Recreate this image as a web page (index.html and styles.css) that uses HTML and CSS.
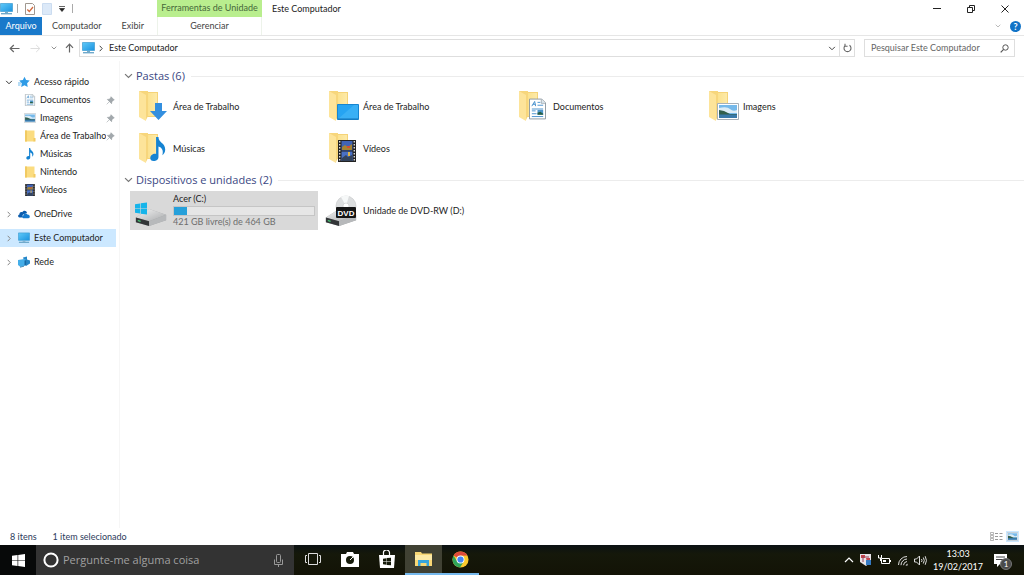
FILE: index.html
```html
<!DOCTYPE html>
<html lang="pt-BR">
<head>
<meta charset="utf-8">
<meta name="viewport" content="width=device-width, initial-scale=1">
<title>Este Computador</title>
<link rel="stylesheet" href="styles.css">
</head>
<body>
<svg class="defs" aria-hidden="true">
  <defs>
    <linearGradient id="screen" x1="0" y1="0" x2="1" y2="1"><stop offset="0" stop-color="#5fc9f8"/><stop offset="1" stop-color="#1b93e0"/></linearGradient>
    <linearGradient id="flap" x1="0" y1="0" x2="1" y2="0"><stop offset="0" stop-color="#fbe08a"/><stop offset="1" stop-color="#fdeaa8"/></linearGradient>
    <linearGradient id="metal" x1="0" y1="0" x2="1" y2="1"><stop offset="0" stop-color="#f4f4f4"/><stop offset="1" stop-color="#a9abad"/></linearGradient>
    <symbol id="pc" viewBox="0 0 13 12"><path d="M.5.5h12v8H.5z" fill="url(#screen)" stroke="#3d9bd0" stroke-width=".7"/><path d="M5 9h3v1H5z" fill="#7aa9c4"/><path d="M1 10h11v1.4H1z" fill="#6fa9cb"/></symbol>
    <symbol id="folder" viewBox="0 0 30 32"><path d="M9 2h11v25H8z" fill="#f5d378"/><path d="M9 3h10v23H8z" fill="url(#flap)"/><path d="M1 1h9v25l-2 4z" fill="#f7d67c"/><path d="M1 1l7 4v26l-7-4z" fill="#fde49a"/></symbol>
    <symbol id="smallfolder" viewBox="0 0 12 12"><path d="M1 .5h9.500v11H1z" fill="#fbdc80"/><path d="M1 .5h2v11H1zM9.500 8h2v3.500h-2z" fill="#f1ca62"/></symbol>
    <symbol id="down" viewBox="0 0 6 4"><path d="M.7.7L3 3 5.300.7" fill="none" stroke="currentColor" stroke-width=".8"/></symbol>
    <symbol id="right" viewBox="0 0 4 7"><path d="M.7.8l2.500 2.700L.7 6.200" fill="none" stroke="currentColor" stroke-width="1"/></symbol>
    <symbol id="note" viewBox="0 0 16 26"><path d="M6 0h2.500c0 6 7 6 7 13 0 3-1.500 5-3 6 1.500-5-.5-8-4-9v10.500c0 3-2.500 4.500-5 4.500S0 23.800 0 21.800C0 19 3 17 6 17.600z" fill="#1583d2"/></symbol>
    <symbol id="film" viewBox="0 0 18 22"><path d="M0 0h18v22H0z" fill="#222"/><path d="M3.500 1h11v9.500h-11z" fill="#3f63b5"/><path d="M3.500 11.500h11V21h-11z" fill="#4a70c4"/><path d="M4 7l3-2 3 2 4-3v6H4z" fill="#a58332"/><path d="M9 6h3v2H9z" fill="#d34d34"/><path d="M4 18l4-3 2 2 4-2v6H4z" fill="#34445c"/><path d="M10 12h2v4h-2z" fill="#dfb447"/><path d="M1.700 1v20M16.300 1v20" stroke="#ddd" stroke-width="1.400" stroke-dasharray="1.500 1.500"/></symbol>
    <symbol id="photo" viewBox="0 0 22 17"><path d="M.5.5h21v16H.5z" fill="#fff" stroke="#a7b0b8"/><path d="M2 2h18v13H2z" fill="#76b9ea"/><path d="M2 5q8-2 11 1t7 1v3H2z" fill="#dcecf6"/><path d="M2 7l5 1 6 3h7v1H2z" fill="#315f4c"/><path d="M2 11.500h18V15H2z" fill="#3979a9"/></symbol>
    <symbol id="doc" viewBox="0 0 18 22"><path d="M.5.5h13l4 4v17H.5z" fill="#fff" stroke="#8b979f"/><path d="M13 1v4h4" fill="#dce8f0" stroke="#8b979f" stroke-width=".7"/><path d="M3 8l3-5 1 5M4 6h3M9 4h3M9 7h6M3 11h12M3 13h4M3 16h5M3 19h12" fill="none" stroke="#3184c7" stroke-width=".9"/><path d="M9 12h6v5H9z" fill="#4c94c9"/><path d="M9 15l3-1 3 2v1H9z" fill="#275f45"/></symbol>
    <symbol id="pin" viewBox="0 0 9 9"><path d="M5 .7L8.300 4l-1 .3-1.500 1.600-.2 1.800-4.300-4.300 1.900-.2L4.800 1.700zM3 6L.7 8.300" fill="#a2a8ac" stroke="#8c9499" stroke-width=".5"/></symbol>
    <symbol id="win" viewBox="0 0 14 14"><path d="M0 2l6-.9v5.500H0zM6.700 1L14 0v6.600H6.700zM0 7.300h6v5.500L0 12zM6.700 7.300H14V14l-7.300-1z" fill="currentColor"/></symbol>
    <symbol id="drive" viewBox="0 0 32 18"><path d="M0 9L14 0l18 6v6l-18 6L0 14z" fill="#a4a6a8"/><path d="M0 9L14 0l18 6-18 7z" fill="url(#metal)"/><path d="M0 9l14 4v5L0 14z" fill="#333638"/><path d="M14 13l18-7v6l-18 6z" fill="#b7b9bb"/><path d="M2 12.200l3 .9" stroke="#48d57a" stroke-width="1.200"/></symbol>
  </defs>
</svg>

<div class="window">
  <header class="top">
    <div class="quick">
      <svg class="qpc"><use href="#pc"/></svg><span class="sep"></span>
      <button class="icon" aria-label="Propriedades"><svg width="10" height="12" viewBox="0 0 10 12"><path d="M.5.5h7l2 2v9h-9z" fill="#fff" stroke="#a09890"/><path d="M2.300 6.500l2 2L8 4" fill="none" stroke="#d2693d" stroke-width="1.300"/></svg></button>
      <button class="icon" aria-label="Nova pasta"><svg width="10" height="12" viewBox="0 0 10 12"><path d="M.5.5h9v11h-9z" fill="#dce9f8" stroke="#cbdcf0"/></svg></button>
      <button class="icon" aria-label="Personalizar"><svg width="6" height="6" viewBox="0 0 6 6"><path d="M0 .5h6M.5 2.500h5L3 5.500z" fill="#222" stroke="#222" stroke-width=".7"/></svg></button><span class="sep"></span>
    </div>
    <div class="tools">Ferramentas de Unidade</div>
    <h1 class="title">Este Computador</h1>
    <div class="winbtns">
      <button class="icon" aria-label="Minimizar"><svg width="10" height="10" viewBox="0 0 10 10"><path d="M1 4.500h8" stroke="#222"/></svg></button>
      <button class="icon" aria-label="Restaurar"><svg width="10" height="10" viewBox="0 0 10 10"><path d="M1.500 3.500h5v5h-5zM3.500 3V1.500h5v5H7" fill="none" stroke="#222"/></svg></button>
      <button class="icon" aria-label="Fechar"><svg width="10" height="10" viewBox="0 0 10 10"><path d="M1.500 1.500l7 7M8.500 1.500l-7 7" stroke="#222"/></svg></button>
    </div>
    <nav class="tabs">
      <button class="tab file">Arquivo</button><button class="tab">Computador</button><button class="tab">Exibir</button>
    </nav>
    <button class="tab manage">Gerenciar</button>
    <div class="help">
      <button class="icon" aria-label="Expandir faixa"><svg class="chev light"><use href="#down"/></svg></button>
      <button class="round" aria-label="Ajuda">?</button>
    </div>
  </header>

  <div class="bar">
    <div class="arrows">
      <button class="icon" aria-label="Voltar"><svg width="11" height="9" viewBox="0 0 11 9"><path d="M10.500 4.500H1.200M4.800 1L1.200 4.500 4.800 8" fill="none" stroke="#666" stroke-width="1.200"/></svg></button>
      <button class="icon" aria-label="Avançar"><svg width="11" height="9" viewBox="0 0 11 9"><path d="M.5 4.500h9.300M6.200 1l3.600 3.500L6.200 8" fill="none" stroke="#ddd"/></svg></button>
      <button class="icon" aria-label="Recentes"><svg class="chev"><use href="#down"/></svg></button>
      <button class="icon" aria-label="Acima"><svg width="9" height="10" viewBox="0 0 9 10"><path d="M4.500 9.500V1.200M1 4.800l3.500-3.600L8 4.800" fill="none" stroke="#666" stroke-width="1.200"/></svg></button>
    </div>
    <div class="address">
      <svg class="apc"><use href="#pc"/></svg>
      <svg class="next"><use href="#right"/></svg>
      <a class="crumb" href="#">Este Computador</a>
      <button class="icon drop" aria-label="Locais anteriores"><svg width="8" height="5"><use href="#down"/></svg></button>
      <button class="icon reload" aria-label="Atualizar"><svg width="9" height="10" viewBox="0 0 9 10"><path d="M2.500 2.300A3.500 3.500 0 1 0 6.500 2.300M2 .8v2.400h2.600" fill="none" stroke="#666" stroke-width="1.100"/></svg></button>
    </div>
    <form class="search">
      <input type="text" aria-label="Pesquisar" placeholder="Pesquisar Este Computador">
      <button class="icon" type="button" aria-label="Buscar"><svg width="9" height="9" viewBox="0 0 9 9"><circle cx="5.500" cy="3.500" r="2.700" fill="none" stroke="#555"/><path d="M3.600 5.400L.7 8.300" stroke="#555" stroke-width="1.200"/></svg></button>
    </form>
  </div>

  <div class="body">
    <nav class="side">
      <a class="root" href="#"><svg class="arrow open"><use href="#down"/></svg><svg class="ico" viewBox="0 0 12 12"><path d="M6.500.8l1.600 3.300 3.600.5-2.600 2.600.6 3.700-3.200-1.700-3.300 1.700.6-3.700L1.200 4.600l3.700-.5z" fill="#2e9be6"/><path d="M0 7h3M0 9h2.500" stroke="#6db8ea"/></svg><span>Acesso rápido</span></a>
      <a class="leaf" href="#"><svg class="ico"><use href="#doc"/></svg><span>Documentos</span><svg class="pin"><use href="#pin"/></svg></a>
      <a class="leaf" href="#"><svg class="ico"><use href="#photo"/></svg><span>Imagens</span><svg class="pin"><use href="#pin"/></svg></a>
      <a class="leaf" href="#"><svg class="ico"><use href="#smallfolder"/></svg><span>Área de Trabalho</span><svg class="pin"><use href="#pin"/></svg></a>
      <a class="leaf" href="#"><svg class="ico"><use href="#note"/></svg><span>Músicas</span></a>
      <a class="leaf" href="#"><svg class="ico"><use href="#smallfolder"/></svg><span>Nintendo</span></a>
      <a class="leaf" href="#"><svg class="ico"><use href="#film"/></svg><span>Vídeos</span></a>
      <a class="root gap" href="#"><svg class="arrow"><use href="#right"/></svg><svg class="ico" viewBox="0 0 12 12"><path d="M1.500 9.500C-.3 9.500-.3 6.700 1.400 6.500 1.300 4.500 3 3.700 4.200 4.300 5.200 2 8.600 2.200 9 5L5 6.500l-1.200 3z" fill="#0b5cad"/><path d="M5.300 10.200c-1.800-.2-1.800-2.500.1-2.800.3-2 3-2.500 4-.8 2.700-.2 3.200 3.400 1 3.600z" fill="#1478cc"/></svg><span>OneDrive</span></a>
      <a class="root gap on" href="#" aria-current="page"><svg class="arrow"><use href="#right"/></svg><svg class="ico"><use href="#pc"/></svg><span>Este Computador</span></a>
      <a class="root gap" href="#"><svg class="arrow"><use href="#right"/></svg><svg class="ico" viewBox="0 0 12 12"><path d="M5 1.500L9 .5v3l3 1v3l-4 2.500z" fill="#2787c8"/><path d="M0 4l6.500-1 2 1v5l-6 2L0 9z" fill="#45aee9"/><path d="M6.500 4.500l2-.5v5l-2 .8z" fill="#1769a5"/><path d="M2 11.200l4-1" stroke="#4a8db8"/></svg><span>Rede</span></a>
    </nav>

    <main class="main">
      <section>
        <h2><svg class="fold"><use href="#down"/></svg>Pastas (6)</h2>
        <div class="grid">
          <a class="item" href="#"><svg class="big" viewBox="0 0 32 34"><use href="#folder" width="30" height="32"/><path d="M17 13h7v8h5l-8.500 9L12 21h5z" fill="#338fdf"/></svg><span>Área de Trabalho</span></a>
          <a class="item" href="#"><svg class="big" viewBox="0 0 32 34"><use href="#folder" width="30" height="32"/><path d="M9.500 14.500h21v15h-21z" fill="#26a4f2" stroke="#1785d0"/><path d="M10 29l16-14h4v14z" fill="#3ab0f5"/><path d="M10 28.500h20v1H10z" fill="#1574b8"/></svg><span>Área de Trabalho</span></a>
          <a class="item" href="#"><svg class="big" viewBox="0 0 32 34"><use href="#folder" width="30" height="32"/><use href="#doc" x="11" y="8" width="17" height="22"/></svg><span>Documentos</span></a>
          <a class="item" href="#"><svg class="big" viewBox="0 0 32 34"><use href="#folder" width="30" height="32"/><use href="#photo" x="9" y="13" width="22" height="17"/></svg><span>Imagens</span></a>
          <a class="item" href="#"><svg class="big" viewBox="0 0 32 34"><use href="#folder" width="30" height="32"/><use href="#note" x="12" y="5" width="16" height="25"/></svg><span>Músicas</span></a>
          <a class="item" href="#"><svg class="big" viewBox="0 0 32 34"><use href="#folder" width="30" height="32"/><use href="#film" x="10" y="8" width="18" height="22"/></svg><span>Vídeos</span></a>
        </div>
      </section>
      <section>
        <h2><svg class="fold"><use href="#down"/></svg>Dispositivos e unidades (2)</h2>
        <div class="grid devices">
          <a class="item drive on" href="#">
            <svg class="disk" viewBox="0 0 34 34"><use href="#drive" x="1" y="15" width="32" height="17"/><g color="#16b4ea"><use href="#win" x="1" y="8" width="12" height="13"/></g></svg>
            <div class="info"><span>Acer (C:)</span><div class="meter"><div class="used"></div></div><span class="free">421 GB livre(s) de 464 GB</span></div>
          </a>
          <a class="item drive" href="#">
            <svg class="disk" viewBox="0 0 34 34"><circle cx="22" cy="12" r="10" fill="#dcdedf" stroke="#c3c5c6" stroke-width=".6"/><path d="M22 12L17 3a10 10 0 0 1 8-1z" fill="#f6f8f8"/><circle cx="22" cy="12" r="3" fill="#fff" stroke="#bbb" stroke-width=".5"/><use href="#drive" x="1" y="15" width="32" height="17"/><rect x="12" y="13" width="20" height="11" rx="1" fill="#151515"/><text x="22" y="22" class="dvd">DVD</text></svg>
            <span>Unidade de DVD-RW (D:)</span>
          </a>
        </div>
      </section>
    </main>
  </div>

  <footer class="status">
    <span>8 itens</span><span class="sel">1 item selecionado</span>
    <div class="views">
      <button class="icon" aria-label="Detalhes"><svg width="13" height="9" viewBox="0 0 13 9"><path d="M.5.5h3v2h-3zM.5 3.500h3v2h-3zM.5 6.500h3v2h-3z" fill="#fff" stroke="#999" stroke-width=".7"/><path d="M5 1.500h3M5 4.500h3M5 7.500h3M9.500 1.500h3M9.500 4.500h3M9.500 7.500h3" stroke="#999"/></svg></button>
      <button class="icon lit" aria-label="Ícones grandes"><svg width="11" height="9"><use href="#photo"/></svg></button>
    </div>
  </footer>
</div>

<footer class="taskbar">
  <button class="start" aria-label="Iniciar"><svg width="13" height="13"><use href="#win"/></svg></button>
  <div class="cortana">
    <svg width="16" height="16" viewBox="0 0 16 16"><circle cx="8" cy="8" r="6.600" fill="none" stroke="#fff" stroke-width="2"/></svg>
    <input type="text" aria-label="Cortana" placeholder="Pergunte-me alguma coisa">
    <svg width="9" height="13" viewBox="0 0 9 13"><rect x="2.500" y=".5" width="4" height="8" rx="1" fill="none" stroke="#999"/><path d="M.5 5.500v5h8v-5M4.500 10.500V13" fill="none" stroke="#999"/></svg>
  </div>
  <div class="apps">
    <button class="app" aria-label="Visão de tarefas"><svg width="16" height="12" viewBox="0 0 16 12"><path d="M3.500.5h9v11h-9zM2 2.500H.5v7H2M14 2.500h1.500v7H14" fill="none" stroke="#ddd"/></svg></button>
    <button class="app" aria-label="Câmera"><svg width="18" height="15" viewBox="0 0 18 15"><path d="M0 2h5l1-2h6l1 2h5v13H0z" fill="#fff"/><circle cx="9" cy="8" r="4" fill="#151a09"/><path d="M9 8l3-3" stroke="#fff" stroke-width="1"/></svg></button>
    <button class="app" aria-label="Loja"><svg width="16" height="18" viewBox="0 0 16 18"><path d="M0 5h16l-1 13H1z" fill="#fff"/><path d="M4.500 6V3.500a3 3 0 0 1 6-1V6" fill="none" stroke="#fff" stroke-width="1.200"/><g color="#151a09"><use href="#win" x="4" y="7.500" width="8" height="8"/></g></svg></button>
    <button class="app active" aria-label="Explorador de Arquivos"><svg width="17" height="14" viewBox="0 0 17 14"><path d="M0 0h6l1 1.500h10V14H0z" fill="#f8d775"/><path d="M0 3h17v5H0z" fill="#fdeaa6"/><path d="M3 14V8h11v6h-2.500v-3h-6v3z" fill="#36a5dd"/></svg></button>
    <button class="app running" aria-label="Chrome"><svg width="17" height="17" viewBox="0 0 18 18"><circle cx="9" cy="9" r="8.500" fill="#fbc92d"/><path d="M9 9L1.640 4.750A8.500 8.500 0 0 1 16.360 4.750L9 5z" fill="#df4a3b"/><path d="M1.640 4.750A8.500 8.500 0 0 0 8.500 17.480L12.500 11 9 9 5.500 11z" fill="#2fa35a"/><circle cx="9" cy="9" r="4.200" fill="#fff"/><circle cx="9" cy="9" r="3.300" fill="#4285f4"/></svg></button>
  </div>
  <div class="tray">
    <svg width="10" height="6" viewBox="0 0 10 6"><path d="M1 5l4-4 4 4" fill="none" stroke="#fff" stroke-width="1.200"/></svg>
    <svg width="12" height="12" viewBox="0 0 12 12"><path d="M0 0h11v8l-5 4-6-4z" fill="#e9e4e8"/><path d="M1 1h4v3H1zM6 4h4v4H7z" fill="#c6464d"/><path d="M6 6h5v5H6z" fill="#347ac4"/><path d="M3 2v6M5 3h4" stroke="#934257"/></svg>
    <svg width="13" height="10" viewBox="0 0 13 10"><path d="M3.500 3.500h8v5h-8zM12.500 5v2M.5 0v3h3V0M2.500 3v3" fill="none" stroke="#fff"/><path d="M5 5h3v2H5z" fill="#fff"/></svg>
    <svg width="11" height="11" viewBox="0 0 11 11"><path d="M1.500 10A8.500 8.500 0 0 1 10 1.500M4 10.200A6.200 6.200 0 0 1 10 4M6.500 10.200A4 4 0 0 1 10 6.500" fill="none" stroke="#ddd"/><path d="M8.500 10.500l2-2v2z" fill="#fff"/></svg>
    <svg width="13" height="11" viewBox="0 0 13 11"><path d="M.5 4h2l3-3v9l-3-3h-2zM7.500 4q1 1.500 0 3M9.300 2.500q2 3 0 6M11.200 1.200q2.500 4.300 0 8.600" fill="none" stroke="#ddd"/></svg>
    <time class="clock"><span>13:03</span><span>19/02/2017</span></time>
    <button class="notes" aria-label="Notificações"><svg width="13" height="13" viewBox="0 0 13 13"><path d="M0 0h13v10H6l-3 3v-3H0z" fill="#fff"/><path d="M2 3h9M2 5.500h9" stroke="#444"/></svg><span class="badge">1</span></button>
  </div>
</footer>
</body>
</html>
```
FILE: styles.css
```css
* { box-sizing: border-box; }
body {
  margin: 0;
  min-height: 100vh;
  display: flex;
  flex-direction: column;
  background: #fff;
  color: #1c1c1c;
  font: 9px/12px Lato, "Open Sans", sans-serif;
}
button, input { font: inherit; color: inherit; border: 0; padding: 0; margin: 0; background: none; }
a { color: inherit; text-decoration: none; }
svg { flex: none; display: block; }
.defs { position: absolute; width: 0; height: 0; }
.icon { display: flex; align-items: center; justify-content: center; }
.window { flex: 1; display: flex; flex-direction: column; }

.top {
  display: grid;
  grid-template-columns: 157px 105px 1fr auto;
  grid-template-rows: 17px 18px;
  border-bottom: 1px solid #e6e6e6;
}
.quick { display: flex; align-items: center; gap: 7px; }
.qpc { width: 13px; height: 12px; margin-right: -3px; }
.sep { width: 1px; height: 9px; background: #aaa; }
.tools { background: #b9ee8e; color: #46683a; text-align: center; line-height: 16px; white-space: nowrap; }
.title { margin: 0; padding-left: 10px; font-size: 9px; font-weight: 400; line-height: 18px; }
.winbtns { display: flex; align-items: center; gap: 24px; padding-right: 14px; }
.tabs { display: flex; }
.tab { text-align: center; color: #444; line-height: 18px; }
.tabs .tab { padding: 0 10px; }
.tabs .file { flex: none; width: 42px; padding: 0; background: #1979ca; color: #fff; }
.manage { border: 1px solid #edf3ea; border-width: 0 1px; }
.help { grid-column: 3 / 5; display: flex; justify-content: flex-end; align-items: center; gap: 9px; padding-right: 3px; }
.chev { width: 6px; height: 4px; color: #777; }
.light { color: #aaa; }
.round { width: 11px; height: 11px; border-radius: 50%; background: #1173c7; color: #fff; font-weight: 700; line-height: 11px; text-align: center; }

.bar { display: flex; gap: 9px; padding: 3px 9px 4px 9px; }
.arrows { display: flex; align-items: center; gap: 10px; width: 61px; }
.arrows .icon:last-child { margin-left: -2px; }
.address { flex: 1; display: flex; align-items: center; height: 18px; border: 1px solid #dedede; padding-left: 2px; }
.apc { width: 13px; height: 12px; }
.next { width: 4px; height: 7px; margin: 0 6px 0 4px; color: #444; }
.crumb { flex: 1; }
.drop { width: 15px; height: 16px; color: #444; }
.reload { width: 15px; height: 16px; border-left: 1px solid #dedede; }
.search { display: flex; align-items: center; width: 151px; height: 18px; border: 1px solid #dedede; padding: 0 5px 0 6px; }
.search input { flex: 1; min-width: 0; }
.search input::placeholder { color: #666; opacity: 1; }

.body { flex: 1; display: flex; }
.side { width: 120px; padding: 12px 3px 0 0; border-right: 1px solid #f6f6f6; display: flex; flex-direction: column; }
.side a { display: flex; align-items: center; height: 18px; }
.root { padding-left: 5px; }
.gap { margin-top: 6px; }
.on { background: #cce8ff; }
.arrow { width: 8px; height: 7px; margin-right: 5px; color: #888; }
.open { height: 5px; color: #333; }
.ico { width: 12px; height: 12px; margin-right: 4px; }
.leaf { padding-left: 24px; }
.leaf span { flex: 1; min-width: 0; overflow: hidden; white-space: nowrap; }
.pin { width: 9px; height: 9px; margin-right: 1px; }

.main { flex: 1; padding: 7px 0 0 4px; }
h2 { display: flex; align-items: center; margin: 0; height: 16px; color: #3a4783; font: 400 11px/16px "Open Sans", "Noto Sans", sans-serif; }
h2::after { content: ""; flex: 1; height: 1px; margin-left: 6px; background: #ececec; }
.fold { width: 9px; height: 6px; margin-right: 3px; color: #777; }
.grid { display: grid; grid-template-columns: repeat(auto-fill, 188px); column-gap: 2px; padding: 2px 0 2px 6px; }
.devices { padding-top: 3px; }
.item { display: flex; align-items: center; height: 42px; padding-left: 8px; }
.big { width: 32px; height: 34px; margin-right: 3px; }
.drive { height: 39px; padding: 0 3px 0 4px; }
.disk { width: 34px; height: 34px; margin-right: 5px; }
.dvd { font: 700 8px "Liberation Sans", sans-serif; fill: #fff; text-anchor: middle; }
.item.on { background: #d9d9d9; }
.info { flex: 1; display: flex; flex-direction: column; }
.meter { height: 10px; margin-top: 1px; border: 1px solid #c5c5c5; background: #e6e6e6; }
.used { width: 9%; height: 100%; background: #26a0da; }
.free { color: #6d6d6d; }

.status { display: flex; align-items: center; height: 17px; padding: 0 5px 0 10px; color: #2c3a5b; }
.sel { margin-left: 16px; }
.views { margin-left: auto; display: flex; gap: 3px; }
.lit { background: #cce8ff; padding: 1px; }

.taskbar { display: flex; height: 30px; background: linear-gradient(#0b1113, #15180a 30%, #131306); color: #fff; }
.start { width: 36px; display: flex; align-items: center; justify-content: center; background: #070909; }
.cortana { width: 258px; display: flex; align-items: center; padding: 0 11px 0 7px; gap: 4px; background: #333; }
.cortana input { flex: 1; min-width: 0; font: 11px/16px "Open Sans", "Noto Sans", sans-serif; }
.cortana input::placeholder { color: #a0a0a0; opacity: 1; }
.apps { display: flex; }
.app { width: 37px; display: flex; align-items: center; justify-content: center; border-bottom: 2px solid transparent; }
.active { background: #404133; border-color: #76b9ed; }
.running { border-color: #76b9ed; }
.tray { margin-left: auto; display: flex; align-items: center; gap: 6px; padding-right: 17px; }
.clock { display: flex; flex-direction: column; text-align: center; line-height: 13px; margin-right: 5px; }
.notes { position: relative; color: #fff; }
.badge { position: absolute; left: 6px; top: 4px; width: 12px; height: 12px; border-radius: 50%; background: #4a4a4a; border: 1px solid #777; font-size: 8px; line-height: 10px; text-align: center; }
```
